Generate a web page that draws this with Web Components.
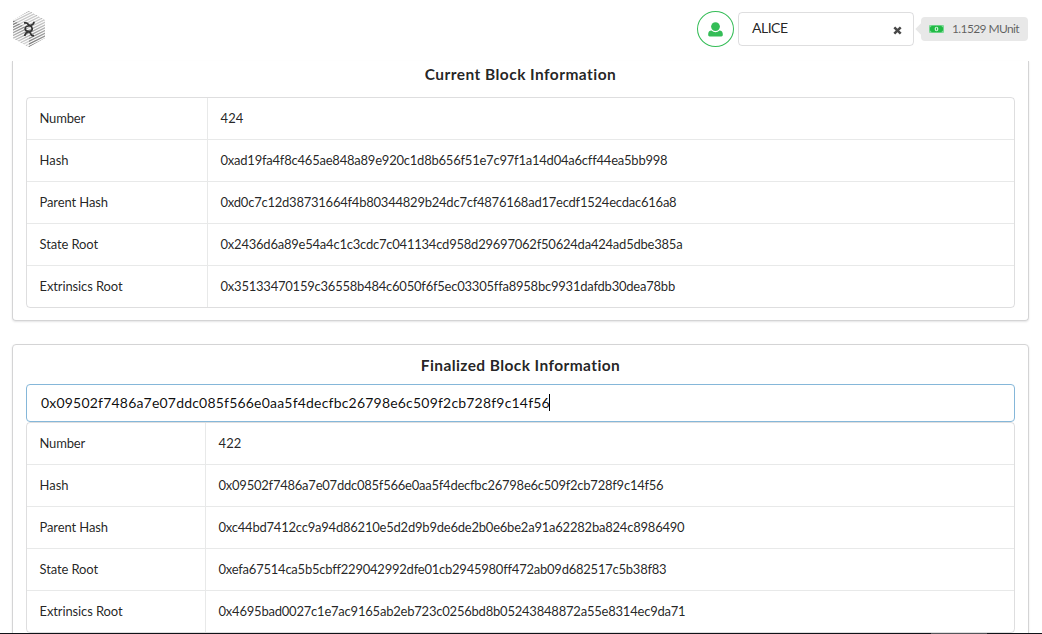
<!DOCTYPE html>
<html lang="en">
<head>
<meta charset="utf-8">
<title>Block Explorer</title>
<style>
html,body{margin:0;height:100%;overflow:hidden;background:#fff}
body{font-family:Lato,"Liberation Sans",sans-serif;color:rgba(0,0,0,.87)}
</style>
</head>
<body>
<explorer-app></explorer-app>
<script>
const define = (name, html, setup) => {
  const t = document.createElement('template');
  t.innerHTML = html;
  customElements.define(name, class extends HTMLElement {
    connectedCallback() {
      if (this.shadowRoot) return;
      this.attachShadow({ mode: 'open' }).append(t.content.cloneNode(true));
      if (setup) setup(this, this.shadowRoot);
    }
  });
};

// Text that spreads its letters to a given width in pixels.
define('fit-text', `<style>:host{display:inline-block;white-space:pre;font-kerning:normal}</style><slot></slot>`, el => {
  const w = +el.getAttribute('w');
  const n = el.textContent.length;
  if (w && n) {
    el.style.letterSpacing = '0.001px';
    const d = (w - el.getBoundingClientRect().width) / n;
    el.style.letterSpacing = d.toFixed(4) + 'px';
  }
});

define('app-logo', `<style>:host{display:block;width:34px;height:38px}svg{display:block}</style>
<svg width="34" height="38" viewBox="0 0 34 38">
<defs>
<clipPath id="h"><path d="M17 0 33 9.300V27L17 36 1 27V9.300Z"/></clipPath>
<linearGradient id="l" x1="0" y1="0" x2="0" y2="1"><stop offset="0" stop-color="#fff" stop-opacity="0"/><stop offset="1" stop-color="#fff" stop-opacity=".8"/></linearGradient>
<linearGradient id="r" x1="0" y1="0" x2="0" y2="1"><stop offset="0" stop-color="#fff" stop-opacity=".65"/><stop offset="1" stop-color="#fff" stop-opacity="0"/></linearGradient>
</defs>
<g clip-path="url(#h)"><g id="s" fill="none" stroke="#707070" stroke-width="1.350"></g>
<path d="M1 9.300 17 0 33 9.300 17 18.500Z" fill="#fff" fill-opacity=".62"/>
<path d="M1 9.300 17 18.500V36L1 27Z" fill="url(#l)"/>
<path d="M33 9.300 17 18.500V36L33 27Z" fill="url(#r)"/></g>
<g fill="none" stroke="#333" stroke-width="1.700"><path d="M12 11.800h2c1.800 0 2 2.200 3.800 2.800M22 10.800c0 2.500-1.600 3.400-4.200 3.800l-2.800.7c-2.400.8-2.400 3.600-.4 4.600l2.400 1c2.400.8 1.600 3.800 3.600 3.800h1.400M17.800 14.600c2.700.8 3.300 4.500.8 5.500l-2.200.8c-2.600.5-3.200 1.600-3.800 4.100"/></g>
</svg>`, (el, r) => {
  const g = r.getElementById('s');
  for (let i = 0; i < 19; i++) {
    const p = document.createElementNS('http://www.w3.org/2000/svg', 'path');
    const y = 3 + i * 2.75;
    p.setAttribute('d', `M0 ${y}L34 ${y - 17}`);
    g.append(p);
  }
});

define('account-avatar', `<style>:host{display:block;box-sizing:border-box;width:37px;height:36px;border:1px solid #35bd57;border-radius:50%}svg{display:block;margin:9.500px 0 0 9.500px}</style>
<svg width="15" height="15" viewBox="0 0 15 15" fill="#35bd57"><circle cx="7.5" cy="4.6" r="4.4"/><path d="M3.5 8.6a5.8 5.8 0 0 0 8 0c2.2.1 3.3 1.6 3.3 3.5v.9c0 .9-.6 1.4-1.4 1.4H1.6C.8 14.400.2 13.900.2 13v-.9c0-1.900 1.100-3.400 3.300-3.500Z"/></svg>`);

define('account-select', `<style>:host{display:flex;justify-content:space-between;box-sizing:border-box;width:176px;height:34px;border:1px solid rgba(34,36,38,.15);border-radius:4px;padding:0 11px 0 13px;font-size:14px;line-height:30px}svg{margin-top:12.500px}</style>
<slot></slot>
<svg width="9" height="9" viewBox="0 0 9 9"><path d="M1.300 1.300 7.700 7.700M7.700 1.300 1.300 7.700" stroke="#484848" stroke-width="2.500"/></svg>`);

define('balance-label', `<style>:host{display:flex;align-items:center;position:relative;box-sizing:border-box;width:107px;height:24px;background:#e8e8e8;border-radius:4px;padding-left:8px;font-size:12px;line-height:14px;color:rgba(0,0,0,.6)}
:host::before{content:"";position:absolute;left:-4px;top:8px;width:8px;height:8px;background:#e8e8e8;transform:rotate(45deg)}
svg{margin-right:8px;position:relative}::slotted(*){margin-top:-1px}</style>
<svg width="15" height="8" viewBox="0 0 15 8"><rect width="15" height="8" rx="1" fill="#7fd998"/><path d="M2.500.8h10c0 .8.700 1.500 1.600 1.500v3.400c-.9 0-1.600.700-1.600 1.500h-10c0-.8-.7-1.500-1.600-1.500V2.300c.9 0 1.600-.7 1.600-1.500Z" fill="#21ba45"/><ellipse cx="7.500" cy="4" rx="1.900" ry="2.300" fill="#c5f0d0"/><path d="M7.500 2.800v2.400" stroke="#21ba45" stroke-width="1"/></svg><slot></slot>`);

define('top-bar', `<style>:host{display:flex;box-sizing:border-box;height:61px;padding:11px 14px 0 12px}app-logo{margin-right:auto}
account-select{margin:1px 0 0 4px}balance-label{margin:6px 0 0 7px}</style>
<app-logo></app-logo><account-avatar></account-avatar><account-select><fit-text w="35.5">ALICE</fit-text></account-select><balance-label><fit-text w="67">1.1529 MUnit</fit-text></balance-label>`);

define('info-card', `<style>:host{display:block;box-sizing:border-box;width:1017px;margin-left:12px;border:1px solid #d4d4d5;border-radius:4px;box-shadow:0 1px 2px rgba(34,36,38,.12);padding:0 13px 13px}
:host([cut]){border-top:0;border-radius:0 0 4px 4px}
h2{margin:0;text-align:center;font-size:15.500px;line-height:20px;font-weight:700}</style><h2><slot name="title"></slot></h2><slot></slot>`);

define('hash-input', `<style>:host{display:flex;align-items:center;box-sizing:border-box;height:38px;border:1px solid #85b7d9;border-radius:4px;padding:0 0 2px 14px;font-size:14px;color:rgba(0,0,0,.95)}i{width:1px;height:17px;margin-left:-1px;background:#000}</style><slot></slot><i></i>`);

define('info-table', `<style>:host{display:block;box-sizing:border-box;border:1px solid rgba(34,36,38,.15);border-radius:4px}</style><slot></slot>`);

define('info-row', `<style>:host{display:grid;grid-template-columns:var(--label,180px) 1fr;box-sizing:border-box;height:42px;border-top:1px solid rgba(34,36,38,.1);font-size:13px;line-height:41px}
:host(:first-child){border-top:0;height:41px}
div{padding-left:12.500px}div+div{border-left:1px solid rgba(34,36,38,.1)}</style>
<div><slot name="label"></slot></div><div><slot></slot></div>`);

define('explorer-app', `<style>:host{display:block;height:634px;overflow:hidden;position:relative}
.a{height:260px}.b{margin-top:23px;height:320px}
.a [slot=title]{margin-top:3px}.b [slot=title]{margin-top:10px}
.a info-table{margin-top:13px}.b hash-input{margin-top:9px}.b info-table{--label:178px}
.edge{position:absolute;left:0;right:0;bottom:0;height:1px;background:linear-gradient(90deg,#111318 931px,#55565a 931px 987px,#111318 987px)}</style>
<top-bar></top-bar><main></main><div class="edge"></div>`, (el, r) => {
  const rows = list => list.map(([l, lw, v, vw]) => `<info-row><fit-text slot="label" w="${lw}">${l}</fit-text><fit-text w="${vw}">${v}</fit-text></info-row>`).join('');
  r.querySelector('main').innerHTML = `
<info-card cut class="a"><fit-text slot="title" w="191.5">Current Block Information</fit-text><info-table>${rows([
['Number',45.5,'424',23],
['Hash',29,'0xad19fa4f8c465ae848a89e920c1d8b656f51e7c97f1a14d04a6cff44ea5bb998',447],
['Parent Hash',68.5,'0xd0c7c12d38731664f4b80344829b24dc7cf4876168ad17ecdf1524ecdac616a8',456],
['State Root',58.5,'0x2436d6a89e54a4c1c3cdc7c041134cd958d29697062f50624da424ad5dbe385a',462],
['Extrinsics Root',83,'0x35133470159c36558b484c6050f6f5ec03305ffa8958bc9931dafdb30dea78bb',454.5]])}</info-table></info-card>
<info-card class="b"><fit-text slot="title" w="199.5">Finalized Block Information</fit-text>
<hash-input><fit-text w="509">0x09502f7486a7e07ddc085f566e0aa5f4decfbc26798e6c509f2cb728f9c14f56</fit-text></hash-input><info-table>${rows([
['Number',45.5,'422',23],
['Hash',29,'0x09502f7486a7e07ddc085f566e0aa5f4decfbc26798e6c509f2cb728f9c14f56',445],
['Parent Hash',68.5,'0xc44bd7412cc9a94d86210e5d2d9b9de6de2b0e6be2a91a62282ba824c8986490',466],
['State Root',58.5,'0xefa67514ca5b5cbff229042992dfe01cb2945980ff472ab09d682517c5b38f83',448],
['Extrinsics Root',83,'0x4695bad0027c1e7ac9165ab2eb723c0256bd8b05243848872a55e8314ec9da71',467]])}</info-table></info-card>`;
});
</script>
</body>
</html>
